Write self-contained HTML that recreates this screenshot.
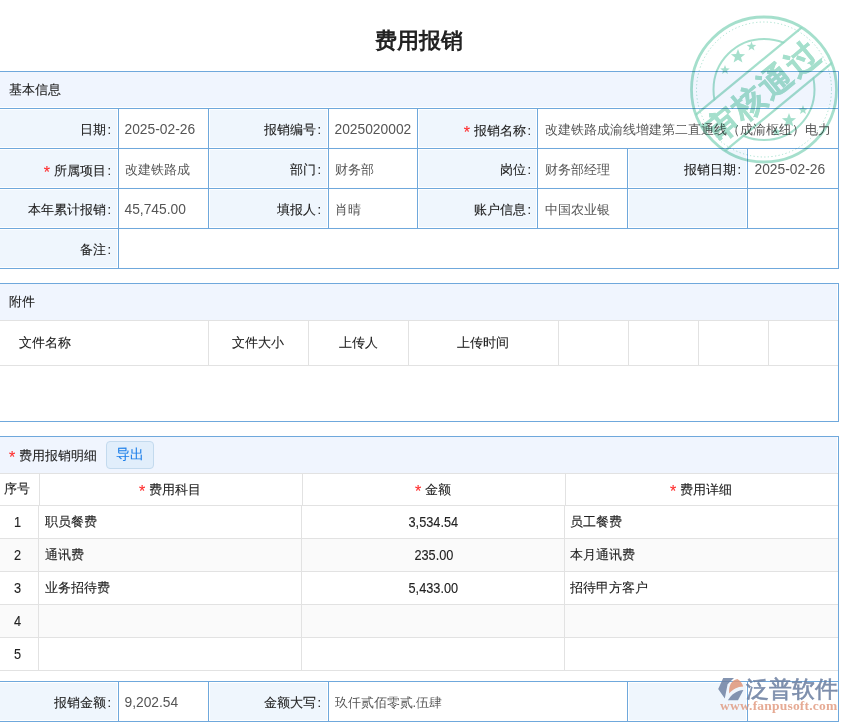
<!DOCTYPE html>
<html><head><meta charset="utf-8"><title>费用报销</title>
<style>
html,body{margin:0;padding:0;background:#fff;}
body{width:848px;height:722px;position:relative;overflow:hidden;font-family:"Liberation Sans",sans-serif;}
.r{position:absolute;}
.t{position:absolute;font-size:13px;line-height:16px;color:#222;white-space:nowrap;-webkit-text-stroke:0.1px currentColor;}
.val{color:#555;-webkit-text-stroke:0;}
.n{font-size:13.8px;position:relative;top:-0.5px;}
.colon{margin-left:1.5px;}
.dn{display:inline-block;transform:scale(0.98,1.1);transform-origin:50% 25%;}
.star{color:#ff2b2b;font-size:16px;margin-right:4px;position:relative;top:2.5px;}
.title{position:absolute;left:0;width:837px;top:27px;text-align:center;font-size:22px;line-height:28px;font-weight:bold;color:#222;}
.btn{position:absolute;box-sizing:border-box;border:1px solid #c3daee;background:#e1eefb;color:#1d7fe9;border-radius:4px;font-size:13.5px;line-height:25.5px;text-align:center;-webkit-text-stroke:0.1px currentColor;}
</style></head><body>
<div class="title">费用报销</div>
<div class="r" style="left:0px;top:72px;width:837px;height:35px;background:#f0f5fe"></div>
<div class="r" style="left:0px;top:110px;width:117px;height:37px;background:#eff6fd"></div>
<div class="r" style="left:210px;top:110px;width:117px;height:37px;background:#eff6fd"></div>
<div class="r" style="left:419px;top:110px;width:117px;height:37px;background:#eff6fd"></div>
<div class="r" style="left:0px;top:150px;width:117px;height:37px;background:#eff6fd"></div>
<div class="r" style="left:210px;top:150px;width:117px;height:37px;background:#eff6fd"></div>
<div class="r" style="left:419px;top:150px;width:117px;height:37px;background:#eff6fd"></div>
<div class="r" style="left:0px;top:190px;width:117px;height:37px;background:#eff6fd"></div>
<div class="r" style="left:210px;top:190px;width:117px;height:37px;background:#eff6fd"></div>
<div class="r" style="left:419px;top:190px;width:117px;height:37px;background:#eff6fd"></div>
<div class="r" style="left:629px;top:150px;width:117px;height:37px;background:#eff6fd"></div>
<div class="r" style="left:629px;top:190px;width:117px;height:37px;background:#eff6fd"></div>
<div class="r" style="left:0px;top:230px;width:117px;height:37px;background:#eff6fd"></div>
<div class="r" style="left:0px;top:71px;width:839px;height:1px;background:#6fa8dc"></div>
<div class="r" style="left:0px;top:108px;width:839px;height:1px;background:#6fa8dc"></div>
<div class="r" style="left:0px;top:148px;width:839px;height:1px;background:#6fa8dc"></div>
<div class="r" style="left:0px;top:188px;width:839px;height:1px;background:#6fa8dc"></div>
<div class="r" style="left:0px;top:228px;width:839px;height:1px;background:#6fa8dc"></div>
<div class="r" style="left:0px;top:268px;width:839px;height:1px;background:#6fa8dc"></div>
<div class="r" style="left:838px;top:71px;width:1px;height:198px;background:#6fa8dc"></div>
<div class="r" style="left:118px;top:108px;width:1px;height:160px;background:#6fa8dc"></div>
<div class="r" style="left:208px;top:108px;width:1px;height:120px;background:#6fa8dc"></div>
<div class="r" style="left:328px;top:108px;width:1px;height:120px;background:#6fa8dc"></div>
<div class="r" style="left:417px;top:108px;width:1px;height:120px;background:#6fa8dc"></div>
<div class="r" style="left:537px;top:108px;width:1px;height:120px;background:#6fa8dc"></div>
<div class="r" style="left:627px;top:148px;width:1px;height:80px;background:#6fa8dc"></div>
<div class="r" style="left:747px;top:148px;width:1px;height:80px;background:#6fa8dc"></div>
<div class="t" style="left:8.5px;top:82px;">基本信息</div>
<div class="t lab" style="right:737px;top:122px;text-align:right;">日期<span class="colon">:</span></div>
<div class="t val" style="left:124.5px;top:122px;"><span class="n">2025-02-26</span></div>
<div class="t lab" style="right:527px;top:122px;text-align:right;">报销编号<span class="colon">:</span></div>
<div class="t val" style="left:334.5px;top:122px;"><span class="n">2025020002</span></div>
<div class="t lab" style="right:317px;top:122px;text-align:right;"><span class="star">*</span>报销名称<span class="colon">:</span></div>
<div class="t val" style="left:544.5px;top:122px;">改建铁路成渝线增建第二直通线（成渝枢纽）电力</div>
<div class="t lab" style="right:737px;top:162px;text-align:right;"><span class="star">*</span>所属项目<span class="colon">:</span></div>
<div class="t val" style="left:124.5px;top:162px;">改建铁路成</div>
<div class="t lab" style="right:527px;top:162px;text-align:right;">部门<span class="colon">:</span></div>
<div class="t val" style="left:334.5px;top:162px;">财务部</div>
<div class="t lab" style="right:317px;top:162px;text-align:right;">岗位<span class="colon">:</span></div>
<div class="t val" style="left:544.5px;top:162px;">财务部经理</div>
<div class="t lab" style="right:107px;top:162px;text-align:right;">报销日期<span class="colon">:</span></div>
<div class="t val" style="left:754.5px;top:162px;"><span class="n">2025-02-26</span></div>
<div class="t lab" style="right:737px;top:202px;text-align:right;">本年累计报销<span class="colon">:</span></div>
<div class="t val" style="left:124.5px;top:202px;"><span class="n">45,745.00</span></div>
<div class="t lab" style="right:527px;top:202px;text-align:right;">填报人<span class="colon">:</span></div>
<div class="t val" style="left:334.5px;top:202px;">肖晴</div>
<div class="t lab" style="right:317px;top:202px;text-align:right;">账户信息<span class="colon">:</span></div>
<div class="t val" style="left:544.5px;top:202px;">中国农业银</div>
<div class="t lab" style="right:737px;top:242px;text-align:right;">备注<span class="colon">:</span></div>
<div class="r" style="left:0px;top:284px;width:837px;height:36px;background:#f0f5fe"></div>
<div class="r" style="left:0px;top:283px;width:839px;height:1px;background:#6fa8dc"></div>
<div class="r" style="left:0px;top:320px;width:838px;height:1px;background:#e2e2e2"></div>
<div class="r" style="left:0px;top:365px;width:838px;height:1px;background:#e2e2e2"></div>
<div class="r" style="left:208px;top:321px;width:1px;height:44px;background:#e2e2e2"></div>
<div class="r" style="left:308px;top:321px;width:1px;height:44px;background:#e2e2e2"></div>
<div class="r" style="left:408px;top:321px;width:1px;height:44px;background:#e2e2e2"></div>
<div class="r" style="left:558px;top:321px;width:1px;height:44px;background:#e2e2e2"></div>
<div class="r" style="left:628px;top:321px;width:1px;height:44px;background:#e2e2e2"></div>
<div class="r" style="left:698px;top:321px;width:1px;height:44px;background:#e2e2e2"></div>
<div class="r" style="left:768px;top:321px;width:1px;height:44px;background:#e2e2e2"></div>
<div class="r" style="left:0px;top:421px;width:839px;height:1px;background:#6fa8dc"></div>
<div class="r" style="left:838px;top:283px;width:1px;height:139px;background:#6fa8dc"></div>
<div class="t" style="left:9px;top:294px;">附件</div>
<div class="t hd" style="left:19px;top:335px;">文件名称</div>
<div class="t hd" style="left:58px;width:400px;top:335px;text-align:center;">文件大小</div>
<div class="t hd" style="left:158px;width:400px;top:335px;text-align:center;">上传人</div>
<div class="t hd" style="left:283px;width:400px;top:335px;text-align:center;">上传时间</div>
<div class="r" style="left:0px;top:437px;width:837px;height:36px;background:#f0f5fe"></div>
<div class="r" style="left:0px;top:436px;width:839px;height:1px;background:#6fa8dc"></div>
<div class="r" style="left:838px;top:436px;width:1px;height:245px;background:#6fa8dc"></div>
<div class="t" style="left:9px;top:447px;"><span class="star">*</span>费用报销明细</div>
<div class="btn" style="left:106px;top:441px;width:48px;height:28px;">导出</div>
<div class="r" style="left:0px;top:473px;width:838px;height:1px;background:#e2e2e2"></div>
<div class="r" style="left:0px;top:505px;width:838px;height:1px;background:#e2e2e2"></div>
<div class="r" style="left:39px;top:474px;width:1px;height:31px;background:#e2e2e2"></div>
<div class="r" style="left:302px;top:474px;width:1px;height:31px;background:#e2e2e2"></div>
<div class="r" style="left:565px;top:474px;width:1px;height:31px;background:#e2e2e2"></div>
<div class="r" style="left:0px;top:539px;width:838px;height:32px;background:#fafafa"></div>
<div class="r" style="left:0px;top:605px;width:838px;height:32px;background:#fafafa"></div>
<div class="r" style="left:0px;top:538px;width:838px;height:1px;background:#e2e2e2"></div>
<div class="r" style="left:0px;top:571px;width:838px;height:1px;background:#e2e2e2"></div>
<div class="r" style="left:0px;top:604px;width:838px;height:1px;background:#e2e2e2"></div>
<div class="r" style="left:0px;top:637px;width:838px;height:1px;background:#e2e2e2"></div>
<div class="r" style="left:0px;top:670px;width:838px;height:1px;background:#e2e2e2"></div>
<div class="r" style="left:38px;top:506px;width:1px;height:164px;background:#e2e2e2"></div>
<div class="r" style="left:301px;top:506px;width:1px;height:164px;background:#e2e2e2"></div>
<div class="r" style="left:564px;top:506px;width:1px;height:164px;background:#e2e2e2"></div>
<div class="t hd" style="left:-183px;width:400px;top:481px;text-align:center;">序号</div>
<div class="t hd" style="left:-30px;width:400px;top:481px;text-align:center;"><span class="star">*</span>费用科目</div>
<div class="t hd" style="left:233px;width:400px;top:481px;text-align:center;"><span class="star">*</span>金额</div>
<div class="t hd" style="left:501px;width:400px;top:481px;text-align:center;"><span class="star">*</span>费用详细</div>
<div class="t dt" style="left:-182px;width:400px;top:514px;text-align:center;"><span class="dn">1</span></div>
<div class="t dt" style="left:45px;top:514px;">职员餐费</div>
<div class="t dt" style="left:233.5px;width:400px;top:514px;text-align:center;"><span class="dn">3,534.54</span></div>
<div class="t dt" style="left:570px;top:514px;">员工餐费</div>
<div class="t dt" style="left:-182px;width:400px;top:547px;text-align:center;"><span class="dn">2</span></div>
<div class="t dt" style="left:45px;top:547px;">通讯费</div>
<div class="t dt" style="left:233.5px;width:400px;top:547px;text-align:center;"><span class="dn">235.00</span></div>
<div class="t dt" style="left:570px;top:547px;">本月通讯费</div>
<div class="t dt" style="left:-182px;width:400px;top:580px;text-align:center;"><span class="dn">3</span></div>
<div class="t dt" style="left:45px;top:580px;">业务招待费</div>
<div class="t dt" style="left:233.5px;width:400px;top:580px;text-align:center;"><span class="dn">5,433.00</span></div>
<div class="t dt" style="left:570px;top:580px;">招待甲方客户</div>
<div class="t dt" style="left:-182px;width:400px;top:613px;text-align:center;"><span class="dn">4</span></div>
<div class="t dt" style="left:45px;top:613px;"></div>
<div class="t dt" style="left:233.5px;width:400px;top:613px;text-align:center;"></div>
<div class="t dt" style="left:570px;top:613px;"></div>
<div class="t dt" style="left:-182px;width:400px;top:646px;text-align:center;"><span class="dn">5</span></div>
<div class="t dt" style="left:45px;top:646px;"></div>
<div class="t dt" style="left:233.5px;width:400px;top:646px;text-align:center;"></div>
<div class="t dt" style="left:570px;top:646px;"></div>
<div class="r" style="left:0px;top:683px;width:117px;height:37px;background:#eff6fd"></div>
<div class="r" style="left:210px;top:683px;width:117px;height:37px;background:#eff6fd"></div>
<div class="r" style="left:629px;top:683px;width:117px;height:37px;background:#eff6fd"></div>
<div class="r" style="left:0px;top:681px;width:839px;height:1px;background:#6fa8dc"></div>
<div class="r" style="left:0px;top:721px;width:839px;height:1px;background:#6fa8dc"></div>
<div class="r" style="left:838px;top:681px;width:1px;height:41px;background:#6fa8dc"></div>
<div class="r" style="left:118px;top:681px;width:1px;height:40px;background:#6fa8dc"></div>
<div class="r" style="left:208px;top:681px;width:1px;height:40px;background:#6fa8dc"></div>
<div class="r" style="left:328px;top:681px;width:1px;height:40px;background:#6fa8dc"></div>
<div class="r" style="left:627px;top:681px;width:1px;height:40px;background:#6fa8dc"></div>
<div class="r" style="left:747px;top:681px;width:1px;height:40px;background:#6fa8dc"></div>
<div class="t lab" style="right:737px;top:695px;text-align:right;">报销金额<span class="colon">:</span></div>
<div class="t val" style="left:124.5px;top:695px;"><span class="n">9,202.54</span></div>
<div class="t lab" style="right:527px;top:695px;text-align:right;">金额大写<span class="colon">:</span></div>
<div class="t val" style="left:334.5px;top:695px;">玖仟贰佰零贰.伍肆</div>
<svg class="stamp" width="848" height="722" viewBox="0 0 848 722" style="position:absolute;left:0;top:0;mix-blend-mode:multiply">
<defs>
<clipPath id="outerc"><circle cx="764" cy="89.5" r="73"/></clipPath>
<mask id="bandmask"><rect x="0" y="0" width="848" height="722" fill="#fff"/>
<g transform="translate(764 89.5) rotate(-39.5)"><rect x="-90" y="-23" width="180" height="45" fill="#000"/></g></mask>
</defs>
<g fill="none" stroke="#8fd8c0" opacity="0.8">
<circle cx="764" cy="89.5" r="72.5" stroke-width="2.8"/>
<circle cx="764" cy="89.5" r="67.5" stroke-width="1" stroke-dasharray="1.2 2.4"/>
<circle cx="764" cy="89.5" r="50.5" stroke-width="2" mask="url(#bandmask)"/>
</g>
<g clip-path="url(#outerc)" opacity="0.8">
<g transform="translate(764 89.5) rotate(-39.5)" fill="#8fd8c0">
<rect x="-90" y="-25" width="180" height="2.3"/>
<rect x="-90" y="21.5" width="180" height="2.3"/>
</g></g>
<g transform="translate(764 89.5) rotate(-39.5)" fill="#8fd8c0" opacity="0.8">
<text x="-2" y="12" font-family="Liberation Sans, sans-serif" font-size="32.5" font-weight="bold" text-anchor="middle" letter-spacing="1.5" stroke="#8fd8c0" stroke-width="0.6">审核通过</text>
</g>
<g fill="#8fd8c0" opacity="0.8">
<polygon points="725.00,65.00 726.23,68.30 729.76,68.45 727.00,70.65 727.94,74.05 725.00,72.10 722.06,74.05 723.00,70.65 720.24,68.45 723.77,68.30"/>
<polygon points="738.00,49.00 739.85,53.95 745.13,54.18 741.00,57.47 742.41,62.57 738.00,59.65 733.59,62.57 735.00,57.47 730.87,54.18 736.15,53.95"/>
<polygon points="751.50,41.50 752.73,44.80 756.26,44.95 753.50,47.15 754.44,50.55 751.50,48.60 748.56,50.55 749.50,47.15 746.74,44.95 750.27,44.80"/>
<polygon points="776.50,127.00 777.73,130.30 781.26,130.45 778.50,132.65 779.44,136.05 776.50,134.10 773.56,136.05 774.50,132.65 771.74,130.45 775.27,130.30"/>
<polygon points="789.00,113.00 790.85,117.95 796.13,118.18 792.00,121.47 793.41,126.57 789.00,123.65 784.59,126.57 786.00,121.47 781.87,118.18 787.15,117.95"/>
<polygon points="803.00,105.00 804.23,108.30 807.76,108.45 805.00,110.65 805.94,114.05 803.00,112.10 800.06,114.05 801.00,110.65 798.24,108.45 801.77,108.30"/>
</g>
</svg>
<svg width="848" height="722" viewBox="0 0 848 722" style="position:absolute;left:0;top:0">
<g opacity="0.85">
<polygon points="723.2,678.1 734,678.1 727.6,684.2 724.8,698.6 718.2,689" fill="#6f82a3"/>
<path d="M729.2,693.6 C728.5,686 731,680.5 737.4,679 C740.5,681 742.6,683.5 743.2,686.6 C737.5,686.8 732.6,689.5 729.2,693.6 Z" fill="#e0967a"/>
<path d="M727.9,700.3 L738,700.3 L743.4,690 C736.5,690.5 731.4,694.5 727.9,700.3 Z" fill="#6f82a3"/>
</g>
<text x="746" y="697" font-family="Liberation Sans, sans-serif" font-size="22.5" fill="#6f82a3" stroke="#6f82a3" stroke-width="0.6" opacity="0.9" letter-spacing="0">泛普软件</text>
<text x="720" y="709.5" font-family="Liberation Serif, serif" font-size="13.5" font-weight="bold" fill="#e0967a" opacity="0.8" letter-spacing="0.2">www.fanpusoft.com</text>
</svg>
</body></html>
